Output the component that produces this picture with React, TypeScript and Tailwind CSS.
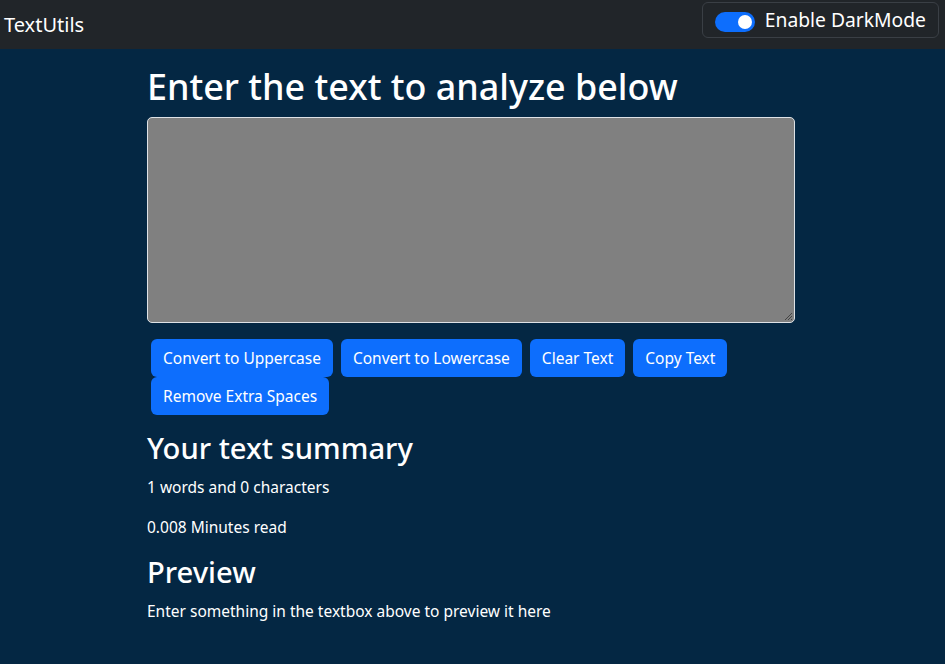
import React from "react";

export default function App() {
  const font = { fontFamily: '"Noto Sans", "Open Sans", sans-serif' };
  return (
    <div className="min-h-[664px] bg-[#042743] text-white" style={font}>
      <nav className="h-[49px] bg-[#212529] flex items-center justify-between pl-[4px] pr-[6px]">
        <span className="text-[20px] leading-[30px] text-white">TextUtils</span>
        <div className="flex items-center h-[36px] mt-[-10px] border border-[#3a3f45] rounded-[6px] pl-[12px] pr-[12px]">
          <div className="w-[40px] h-[20px] rounded-full bg-[#0d6efd] flex items-center justify-end pr-[3px] mt-[4px]">
            <div className="w-[14px] h-[14px] rounded-full bg-white" />
          </div>
          <span className="ml-[10px] text-[19.3px] leading-[30px] text-white">Enable DarkMode</span>
        </div>
      </nav>
      <div className="w-[648px] ml-[147px] pt-[16px]">
        <h1 className="text-[35.9px] leading-[1.2] font-medium mb-[8px] h-[44px]">Enter the text to analyze below</h1>
        <div className="relative h-[206px] bg-[#808080] border border-[#dee2e6] rounded-[5px] mb-[16px]">
          <svg className="absolute right-[1px] bottom-[1px]" width="10" height="10" viewBox="0 0 10 10">
            <line x1="9" y1="2" x2="2" y2="9" stroke="#444" strokeWidth="1" />
            <line x1="9" y1="5" x2="5" y2="9" stroke="#444" strokeWidth="1" />
            <line x1="9" y1="8" x2="8" y2="9" stroke="#444" strokeWidth="1" />
          </svg>
        </div>
        <div className="flex flex-wrap">
          {["Convert to Uppercase", "Convert to Lowercase", "Clear Text", "Copy Text", "Remove Extra Spaces"].map((t) => (
            <button key={t} className="mx-[4px] h-[38px] px-[12px] bg-[#0d6efd] rounded-[6px] text-[15.5px] leading-[24px] text-white">
              {t}
            </button>
          ))}
        </div>
        <div className="pt-[16px]">
          <h2 className="text-[29.2px] leading-[1.2] font-medium mb-[8px] h-[36px]">Your text summary</h2>
          <p className="text-[15.5px] leading-[24px] mb-[16px]">1 words and 0 characters</p>
          <p className="text-[15.5px] leading-[24px] mb-[16px]">0.008 Minutes read</p>
          <h2 className="text-[29.2px] leading-[1.2] font-medium mb-[8px] h-[36px]">Preview</h2>
          <p className="text-[15.5px] leading-[24px]">Enter something in the textbox above to preview it here</p>
        </div>
      </div>
    </div>
  );
}
